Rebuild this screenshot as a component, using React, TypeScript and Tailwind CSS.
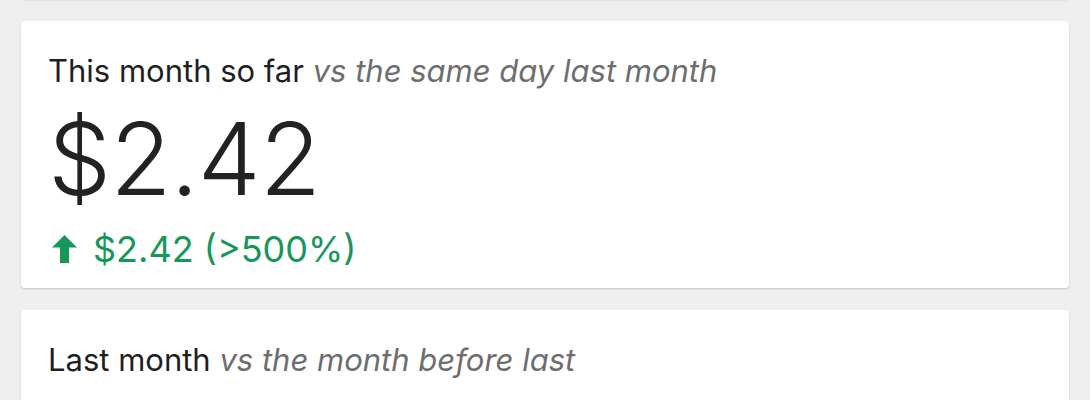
const ArrowUp = () => (
  <svg width="25" height="28" viewBox="0 0 25 28" className="shrink-0">
    <path d="M12.5 0 L25 12.5 L17 12.5 L17 28 L8 28 L8 12.5 L0 12.5 Z" fill="#17975a" />
  </svg>
);

const Card: React.FC<{ title: string; sub: string; children?: React.ReactNode; className?: string }> = ({
  title,
  sub,
  children,
  className = '',
}) => (
  <div className={`bg-white rounded-[4px] shadow-[0_1px_2px_rgba(0,0,0,0.18)] px-[27px] ${className}`}>
    <div className="pt-[33px] text-[31px] leading-[34px] text-[#1f1f1f]">
      {title} <span className="italic text-[#6e6e6e]">{sub}</span>
    </div>
    {children}
  </div>
);

export default function App() {
  return (
    <div
      className="w-[1090px] h-[400px] overflow-hidden bg-[#efefef] px-[21px] flex flex-col gap-[22px]"
      style={{ fontFamily: 'Inter, "Noto Sans", sans-serif' }}
    >
      <div className="-mt-[100px] h-[99px] shrink-0 bg-white rounded-[4px] shadow-[0_1px_2px_rgba(0,0,0,0.18)]" />

      <Card title="This month so far" sub="vs the same day last month" className="h-[267px] shrink-0">
        <div className="mt-[21px] text-[100px] leading-[100px] font-light text-[#222] tracking-[-1px]">
          $2.42
        </div>
        <div className="mt-[22px] pl-[4px] flex items-center gap-[16px] text-[36px] leading-[36px] text-[#17975a]">
          <ArrowUp />
          <span>$2.42 (&gt;500%)</span>
        </div>
      </Card>

      <Card title="Last month" sub="vs the month before last" className="h-[200px] shrink-0" />
    </div>
  );
}
